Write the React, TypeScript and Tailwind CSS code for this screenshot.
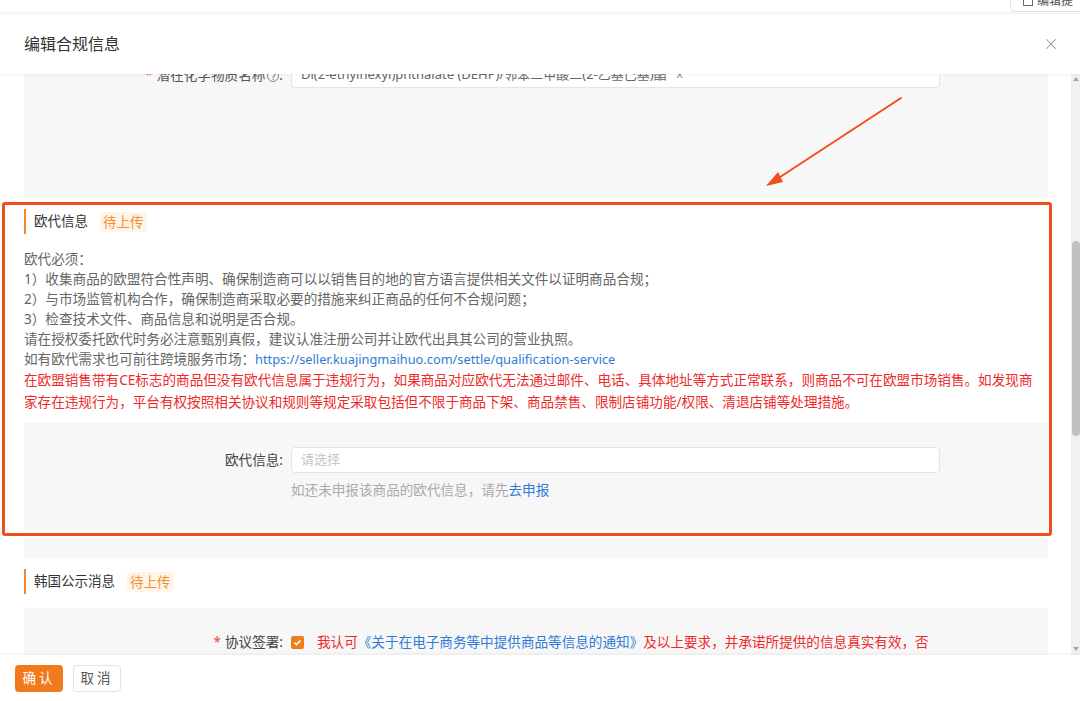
import React from "react";
import { X } from "lucide-react";

const FONT = { fontFamily: '"Noto Sans", "Noto Sans CJK SC", sans-serif' };

const SectionTitle = ({ title }: { title: string }) => (
  <div className="flex h-[25px] items-center border-l-2 border-[#f08a2c] pl-2">
    <span className="text-[13.5px] text-[#333]">{title}</span>
    <span className="ml-3 rounded-sm bg-[#fff4e8] px-[3px] text-[13.5px] leading-[20px] text-[#f0922e]">待上传</span>
  </div>
);

const App = () => {
  return (
    <div className="relative flex h-[701px] w-[1080px] flex-col overflow-hidden bg-white text-[13.6px]" style={FONT}>
      {/* page behind the modal */}
      <div className="flex h-[14px] shrink-0 justify-end overflow-hidden bg-white">
        <div className="-mt-[10px] mr-[-6px] flex h-[22px] items-center gap-1 rounded border border-[#e5e5e5] bg-white px-3 text-[12px] text-[#555]">
          <span className="inline-block h-[10px] w-[10px] border border-[#666]" />
          <span>编辑提</span>
        </div>
      </div>

      {/* header */}
      <div className="relative z-10 flex h-[60px] shrink-0 items-center justify-between bg-white pl-6 pr-[20px] shadow-[0_-1px_3px_rgba(0,0,0,0.08),0_1px_2px_rgba(0,0,0,0.04)]">
        <h1 className="text-[16px] font-normal text-[#333]">编辑合规信息</h1>
        <X size={18} strokeWidth={1.4} className="text-[#999]" />
      </div>

      {/* body */}
      <div className="relative flex min-h-0 flex-1">
        <div className="min-w-0 flex-1 overflow-hidden pl-6 pr-[23px]">
          {/* previous section form block (scrolled) */}
          <div className="-mt-[16px] h-[140px] bg-[#f7f7f8] pt-[4px]">
            <div className="flex items-center">
              <div className="w-[267px] pr-2 text-right text-[#555]">
                <span className="mr-1 text-[#f04848]">*</span>潜在化学物质名称
                <span className="ml-[2px] inline-flex h-[12px] w-[12px] items-center justify-center rounded-full border border-[#888] text-[9px] leading-none">?</span>:
              </div>
              <div className="flex h-[26px] w-[649px] items-center rounded border border-[#e4e4e4] bg-white px-[9px] text-[13px] text-[#666]">
                Di(2-ethylhexyl)phthalate (DEHP)/邻苯二甲酸二(2-乙基己基)酯
                <span className="ml-2 text-[11px] text-[#999]">✕</span>
              </div>
            </div>
          </div>

          {/* 欧代信息 */}
          <div className="bg-white pt-[11px] pb-[8px]">
            <SectionTitle title="欧代信息" />
            <div className="mt-[15px] whitespace-nowrap leading-[20px] text-[#666]">
              <div>欧代必须：</div>
              <div>1）收集商品的欧盟符合性声明、确保制造商可以以销售目的地的官方语言提供相关文件以证明商品合规；</div>
              <div>2）与市场监管机构合作，确保制造商采取必要的措施来纠正商品的任何不合规问题；</div>
              <div>3）检查技术文件、商品信息和说明是否合规。</div>
              <div>请在授权委托欧代时务必注意甄别真假，建议认准注册公司并让欧代出具其公司的营业执照。</div>
              <div>
                如有欧代需求也可前往跨境服务市场：
                <span className="text-[12.8px] text-[#2f7bd6]">https://seller.kuajingmaihuo.com/settle/qualification-service</span>
              </div>
              <div className="leading-[21.5px] text-[#ee2a2a]">
                在欧盟销售带有CE标志的商品但没有欧代信息属于违规行为，如果商品对应欧代无法通过邮件、电话、具体地址等方式正常联系，则商品不可在欧盟市场销售。如发现商
                <br />
                家存在违规行为，平台有权按照相关协议和规则等规定采取包括但不限于商品下架、商品禁售、限制店铺功能/权限、清退店铺等处理措施。
              </div>
            </div>
            <div className="mt-[11px] h-[107px] bg-[#f7f7f8] pt-[24px]">
              <div className="flex items-center">
                <div className="w-[267px] pr-2 text-right text-[#444]">欧代信息:</div>
                <div className="flex h-[26px] w-[649px] items-center rounded border border-[#e4e4e4] bg-white px-[9px] text-[13px] text-[#c4c4c4]">请选择</div>
              </div>
              <div className="mt-[7px] pl-[267px] text-[#aaa]">
                如还未申报该商品的欧代信息，请先<span className="text-[#2f7bd6]">去申报</span>
              </div>
            </div>
          </div>

          <div className="h-[20px] bg-[#f7f7f8]" />

          {/* 韩国公示消息 */}
          <div className="bg-white pt-[11px]">
            <SectionTitle title="韩国公示消息" />
            <div className="mt-[14px] h-[80px] bg-[#f7f7f8] pt-[24px]">
              <div className="flex items-center">
                <div className="w-[267px] pr-2 text-right text-[#444]">
                  <span className="mr-1 text-[#f04848]">*</span>协议签署:
                </div>
                <span className="flex h-[13px] w-[13px] shrink-0 items-center justify-center rounded-[2px] bg-[#f07c1e] text-white">
                  <svg viewBox="0 0 12 12" width="9" height="9" fill="none" stroke="white" strokeWidth="2">
                    <path d="M2 6.2l2.6 2.6L10 3.4" />
                  </svg>
                </span>
                <span className="ml-[13px] whitespace-nowrap text-[#ee2a2a]">
                  我认可<span className="text-[#2f7bd6]">《关于在电子商务等中提供商品等信息的通知》</span>及以上要求，并承诺所提供的信息真实有效，否
                </span>
              </div>
            </div>
          </div>
        </div>

        {/* scrollbar */}
        <div className="flex w-[9px] shrink-0 flex-col items-center bg-[#f1f1f1]">
          <div className="mt-[3px] h-0 w-0 border-x-[3px] border-b-[4px] border-x-transparent border-b-[#a3a3a3]" />
          <div className="mt-[160px] h-[195px] w-[8px] rounded-sm bg-[#c1c1c1]" />
          <div className="mt-auto mb-[4px] h-0 w-0 border-x-[3px] border-t-[4px] border-x-transparent border-t-[#a3a3a3]" />
        </div>

        {/* annotation: red frame */}
        <div className="pointer-events-none absolute left-[2px] top-[128px] h-[334px] w-[1050px] rounded-[3px] border-[3px] border-[#f04e1a]" />
        {/* annotation: arrow */}
        <svg className="pointer-events-none absolute left-0 top-0" width="1080" height="200" viewBox="0 0 1080 200">
          <line x1="901" y1="24" x2="774" y2="107" stroke="#f04e1a" strokeWidth="2" strokeLinecap="round" />
          <path d="M766 112 L778 98 L783 108 Z" fill="#f04e1a" />
        </svg>
      </div>

      {/* footer */}
      <div className="relative z-10 flex h-[46px] shrink-0 items-center gap-[10px] bg-white pl-[15px] shadow-[0_-1px_3px_rgba(0,0,0,0.06)]">
        <button className="h-[27px] w-[48px] rounded bg-[#f07a1c] text-[13.5px] tracking-[3px] text-white">确认</button>
        <button className="h-[27px] w-[48px] rounded border border-[#e2e2e2] bg-white text-[13.5px] tracking-[3px] text-[#555]">取消</button>
      </div>
    </div>
  );
};

export default App;
